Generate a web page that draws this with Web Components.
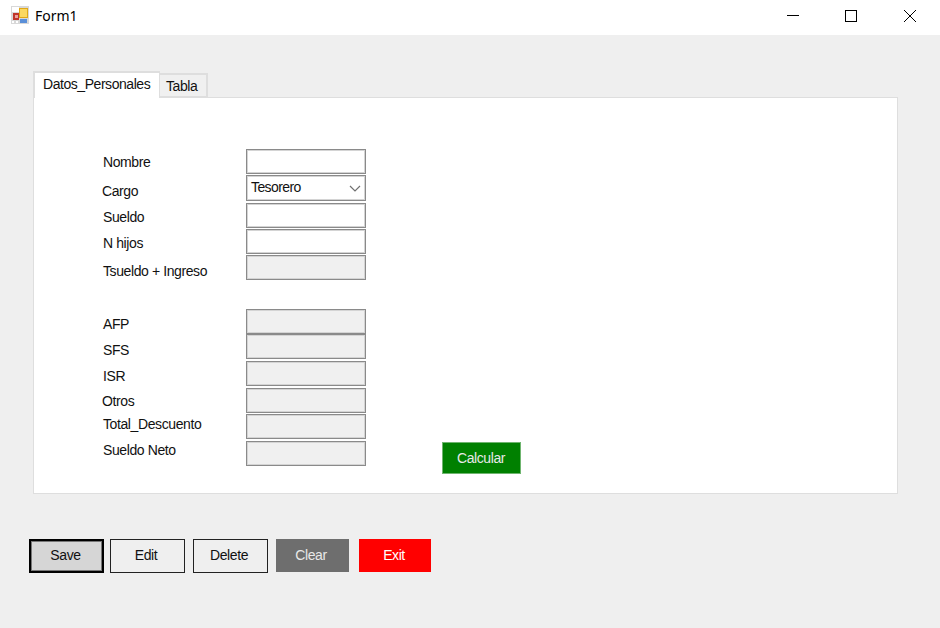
<!DOCTYPE html>
<html>
<head>
<meta charset="utf-8">
<title>Form1</title>
<style>
  html, body { margin: 0; padding: 0; }
  body { width: 940px; height: 628px; overflow: hidden; background: #efefef; font-family: "Liberation Sans", Arial, sans-serif; font-size: 14px; letter-spacing: -0.4px; color: #111; }
</style>
</head>
<body>
<win-form>
  <win-titlebar slot="title">Form1</win-titlebar>
  <tab-panel>
    <field-row label="Nombre" dy="5"></field-row>
    <field-row label="Cargo" dy="8" lx="-1" type="combo" value="Tesorero" gap="1"></field-row>
    <field-row label="Sueldo" dy="6" gap="3"></field-row>
    <field-row label="N hijos" dy="6" gap="1"></field-row>
    <field-row label="Tsueldo + Ingreso" dy="8" type="off" gap="1"></field-row>
    <field-row label="AFP" dy="7" type="off" gap="29"></field-row>
    <field-row label="SFS" dy="8" type="off"></field-row>
    <field-row label="ISR" dy="7" type="off" gap="2"></field-row>
    <field-row label="Otros" dy="5" lx="-1" type="off" gap="2"></field-row>
    <field-row label="Total_Descuento" dy="2" type="off" gap="1"></field-row>
    <field-row label="Sueldo Neto" dy="1" type="off" gap="2">
      <win-button kind="calc">Calcular</win-button>
    </field-row>
  </tab-panel>
  <div slot="actions" style="display:flex;gap:6px">
    <win-button kind="default">Save</win-button>
    <win-button kind="plain">Edit</win-button>
    <win-button kind="plain" style="margin-left:2px">Delete</win-button>
    <win-button kind="gray" style="margin-left:2px">Clear</win-button>
    <win-button kind="red" style="margin-left:4px">Exit</win-button>
  </div>
</win-form>

<script>
// outer window: title bar on top, then the tab control, then the button row
class WinForm extends HTMLElement {
  constructor() {
    super();
    this.attachShadow({ mode: 'open' });
    this.shadowRoot.innerHTML = `
      <style>
        :host { display: block; width: 940px; height: 628px; background: #efefef; }
        .content { padding: 36px 42px 0 33px; }
        .actions { padding: 45px 0 0 29px; }
      </style>
      <slot name="title"></slot>
      <div class="content"><slot></slot></div>
      <div class="actions"><slot name="actions"></slot></div>
    `;
  }
}

class WinTitlebar extends HTMLElement {
  constructor() {
    super();
    this.attachShadow({ mode: 'open' });
    this.shadowRoot.innerHTML = `
      <style>
        :host { display: flex; align-items: flex-start; height: 35px; background: #fff; color: #000; font-family: "Noto Sans", "Liberation Sans", sans-serif; font-size: 14px; letter-spacing: 0; }
        .icon { margin: 6px 6px 0 11px; width: 18px; height: 18px; flex: none; }
        .text { flex: 1; margin-top: 6px; line-height: 19px; }
        .btn { width: 58px; height: 35px; display: flex; justify-content: center; padding-top: 10px; box-sizing: border-box; }
        .close { width: 60px; }
        svg { display: block; shape-rendering: crispEdges; }
        .close svg { shape-rendering: auto; }
      </style>
      <svg class="icon" viewBox="0 0 18 18">
        <rect width="18" height="18" fill="#d8d8d8"/>
        <rect x="1" y="1" width="7" height="5" fill="#fff"/>
        <rect x="2" y="7" width="6" height="7" fill="#c0352b"/>
        <rect x="3.5" y="9" width="3" height="3" fill="#e8a0a0"/>
        <rect x="8" y="2" width="9" height="10" fill="#e0a818"/>
        <rect x="9" y="3" width="7" height="8" fill="#fbd860"/>
        <rect x="9" y="13" width="7" height="4" fill="#5a8fd8"/>
        <rect x="1" y="15" width="2" height="2" fill="#fff"/>
        <rect x="5" y="15" width="2" height="2" fill="#fff"/>
      </svg>
      <span class="text"><slot></slot></span>
      <div class="btn"><svg width="12" height="12"><rect x="0" y="5" width="12" height="1" fill="#000"/></svg></div>
      <div class="btn"><svg width="12" height="12"><rect x="0.5" y="0.5" width="11" height="11" fill="none" stroke="#000"/></svg></div>
      <div class="btn close"><svg width="12" height="12"><line x1="0" y1="0" x2="12" y2="12" stroke="#000"/><line x1="12" y1="0" x2="0" y2="12" stroke="#000"/></svg></div>
    `;
  }
}

// tab strip plus white page, children of the element are the form rows
class TabPanel extends HTMLElement {
  constructor() {
    super();
    this.attachShadow({ mode: 'open' });
    this.shadowRoot.innerHTML = `
      <style>
        :host { display: block; color: #111; }
        .strip { display: flex; align-items: flex-end; height: 26px; position: relative; z-index: 1; }
        .tab { box-sizing: border-box; border: 1px solid #dedede; line-height: 16px; }
        .on { width: 127px; height: 27px; padding: 3px 0 0 8px; margin-bottom: -1px; background: #fff; border-bottom: 0; border-width: 2px 1px 0 2px; letter-spacing: -0.45px; }
        .off { width: 48px; height: 24px; padding: 3px 0 0 6px; background: #f0f0f0; border-left: 0; border-width: 2px 2px 1px 0; }
        .page { box-sizing: border-box; height: 397px; background: #fff; border: 1px solid #dedede; padding: 51px 0 0 68px; }
      </style>
      <div class="strip"><div class="tab on">Datos_Personales</div><div class="tab off">Tabla</div></div>
      <div class="page"><slot></slot></div>
    `;
  }
}

class FieldRow extends HTMLElement {
  constructor() {
    super();
    this.attachShadow({ mode: 'open' });
  }
  connectedCallback() {
    const type = this.getAttribute('type') || 'text';
    const label = this.getAttribute('label') || '';
    const dy = this.getAttribute('dy') || 0;
    const lx = this.getAttribute('lx') || 0;
    const gap = this.getAttribute('gap') || 0;
    const value = this.getAttribute('value') || '';
    const arrow = type === 'combo'
      ? `<svg width="12" height="7" viewBox="0 0 12 7"><path d="M1 1l5 5 5-5" fill="none" stroke="#707070" stroke-width="1.2"/></svg>` : '';
    this.shadowRoot.innerHTML = `
      <style>
        :host { display: block; margin-top: ${gap}px; }
        .row { display: flex; height: 25px; }
        .label { width: 144px; flex: none; box-sizing: border-box; padding-top: ${dy}px; padding-left: ${+lx + 1}px; line-height: 16px; white-space: nowrap; }
        .box { box-sizing: border-box; width: 120px; height: 25px; background: #fff; border: 1px solid #8a8a8a; box-shadow: inset 0 0 0 1px #d4d4d4; display: flex; align-items: center; justify-content: space-between; padding: 0 4px; flex: none; }
        .off { background: #f0f0f0; }
        .combo { height: 26px; padding-bottom: 3px; letter-spacing: -0.6px; }
        .combo svg { margin-top: 3px; }
        .extra { position: relative; margin-left: 76px; }
      </style>
      <div class="row">
        <div class="label">${label}</div>
        <div class="box ${type}">${value}${arrow}</div>
        <div class="extra"><slot></slot></div>
      </div>
    `;
  }
}

const BUTTON_LOOKS = {
  default: 'width:75px;height:34px;background:#d6d6d6;border:2px solid #000;box-shadow:inset 0 0 0 1px #777;padding:0 2px 2px 0;',
  plain: 'width:75px;height:34px;background:#efefef;border:1px solid #222;padding:0 3px 2px 0;',
  gray: 'width:73px;height:33px;background:#6e6e6e;color:#e8e8e8;padding:0 3px 1px 0;',
  red: 'width:72px;height:33px;background:#ff0000;color:#fff;padding:0 2px 1px 0;',
  calc: 'width:79px;height:32px;background:#008000;color:#e8e8e8;margin-top:1px;border:1px solid #6fb56f;padding-right:1px;'
};

class WinButton extends HTMLElement {
  constructor() {
    super();
    this.attachShadow({ mode: 'open' });
  }
  connectedCallback() {
    const look = BUTTON_LOOKS[this.getAttribute('kind')] || BUTTON_LOOKS.plain;
    this.shadowRoot.innerHTML = `
      <style>
        :host { display: block; flex: none; }
        .b { box-sizing: border-box; display: flex; align-items: center; justify-content: center; ${look} }
      </style>
      <div class="b"><slot></slot></div>
    `;
  }
}

customElements.define('win-form', WinForm);
customElements.define('win-titlebar', WinTitlebar);
customElements.define('tab-panel', TabPanel);
customElements.define('field-row', FieldRow);
customElements.define('win-button', WinButton);
</script>
</body>
</html>
